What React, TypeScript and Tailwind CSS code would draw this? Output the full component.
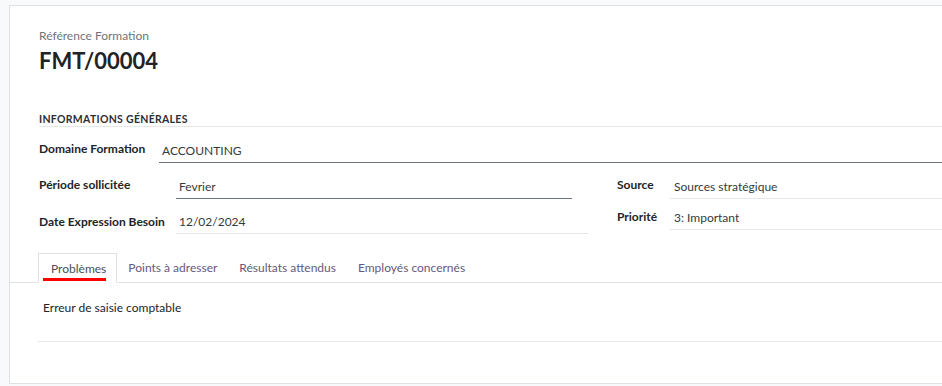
export default function App() {
  const tabs = ["Problèmes", "Points à adresser", "Résultats attendus", "Employés concernés"];

  return (
    <div
      className="min-h-screen bg-[#f8f9fa] pt-[5px] pl-[9px] text-[#212529]"
      style={{ fontFamily: 'Lato, "Open Sans", sans-serif' }}
    >
      <div className="h-[379px] bg-white border-l border-t border-b border-[#dee2e6]">
        {/* Header */}
        <div className="pl-[29px] pt-[21px]">
          <div className="text-[12px] leading-[18px] text-[#6c757d]">Référence Formation</div>
          <div className="text-[22px] leading-[31px] font-bold text-[#1f2328]">FMT/00004</div>

          {/* Section */}
          <div className="mt-[36px] text-[10.5px] font-bold leading-[14px] border-b border-[#e5e7eb] tracking-[0.3px] text-[#2b2f33]">
            INFORMATIONS GÉNÉRALES
          </div>

          <div className="flex items-end h-[36px]">
            <div className="w-[120px] text-[12px] font-bold pb-[5px] text-[#212529]">Domaine Formation</div>
            <div className="flex-1 border-b border-[#6c757d] text-[12px] pl-[3px] pb-[1px] leading-[20px] text-[#343a40]">
              ACCOUNTING
            </div>
          </div>

          <div className="flex">
            {/* Left column */}
            <div className="w-[549px]">
              <div className="flex items-end h-[36px]">
                <div className="w-[137px] text-[12px] font-bold pb-[5px]">Période sollicitée</div>
                <div className="w-[396px] border-b border-[#6c757d] text-[12px] pl-[3px] pb-[1px] leading-[20px] text-[#343a40]">
                  Fevrier
                </div>
              </div>
              <div className="flex items-end h-[35px]">
                <div className="w-[137px] text-[12px] font-bold pb-[3px]">Date Expression Besoin</div>
                <div className="flex-1 border-b border-[#e5e7eb] text-[12px] pl-[3px] pb-[1px] leading-[20px] text-[#343a40]">
                  12/02/2024
                </div>
              </div>
            </div>

            {/* Right column */}
            <div className="ml-[29px] flex-1">
              <div className="flex items-end h-[36px]">
                <div className="w-[53px] text-[12px] font-bold pb-[5px]">Source</div>
                <div className="flex-1 border-b border-[#e5e7eb] text-[12px] pl-[4px] pb-[1px] leading-[20px] text-[#343a40]">
                  Sources stratégique
                </div>
              </div>
              <div className="flex items-end h-[31px]">
                <div className="w-[53px] text-[12px] font-bold pb-[4px]">Priorité</div>
                <div className="flex-1 border-b border-[#e5e7eb] text-[12px] pl-[4px] pb-[1px] leading-[20px] text-[#343a40]">
                  3: Important
                </div>
              </div>
            </div>
          </div>
        </div>

        {/* Tabs */}
        <div className="mt-[19px] flex border-b border-[#dee2e6] pl-[28px]">
          {tabs.map((t, i) => (
            <div
              key={t}
              className={
                i === 0
                  ? "relative -mb-px h-[30px] pl-[12px] pr-[10px] pt-[6px] text-[12px] leading-[18px] text-[#495057] bg-white border border-b-white border-[#dee2e6]"
                  : "h-[29px] px-[11px] pt-[6px] text-[12px] leading-[18px] text-[#66597a]"
              }
            >
              {t}
              {i === 0 && <span className="absolute left-[4px] right-[10px] bottom-[1px] h-[3px] bg-[#ff0000]" />}
            </div>
          ))}
        </div>

        <div className="ml-[28px] pl-[5px] pt-[16px] h-[59px] border-b border-[#e5e7eb] text-[12px] leading-[18px] text-[#212529]">
          Erreur de saisie comptable
        </div>
      </div>
    </div>
  );
}
